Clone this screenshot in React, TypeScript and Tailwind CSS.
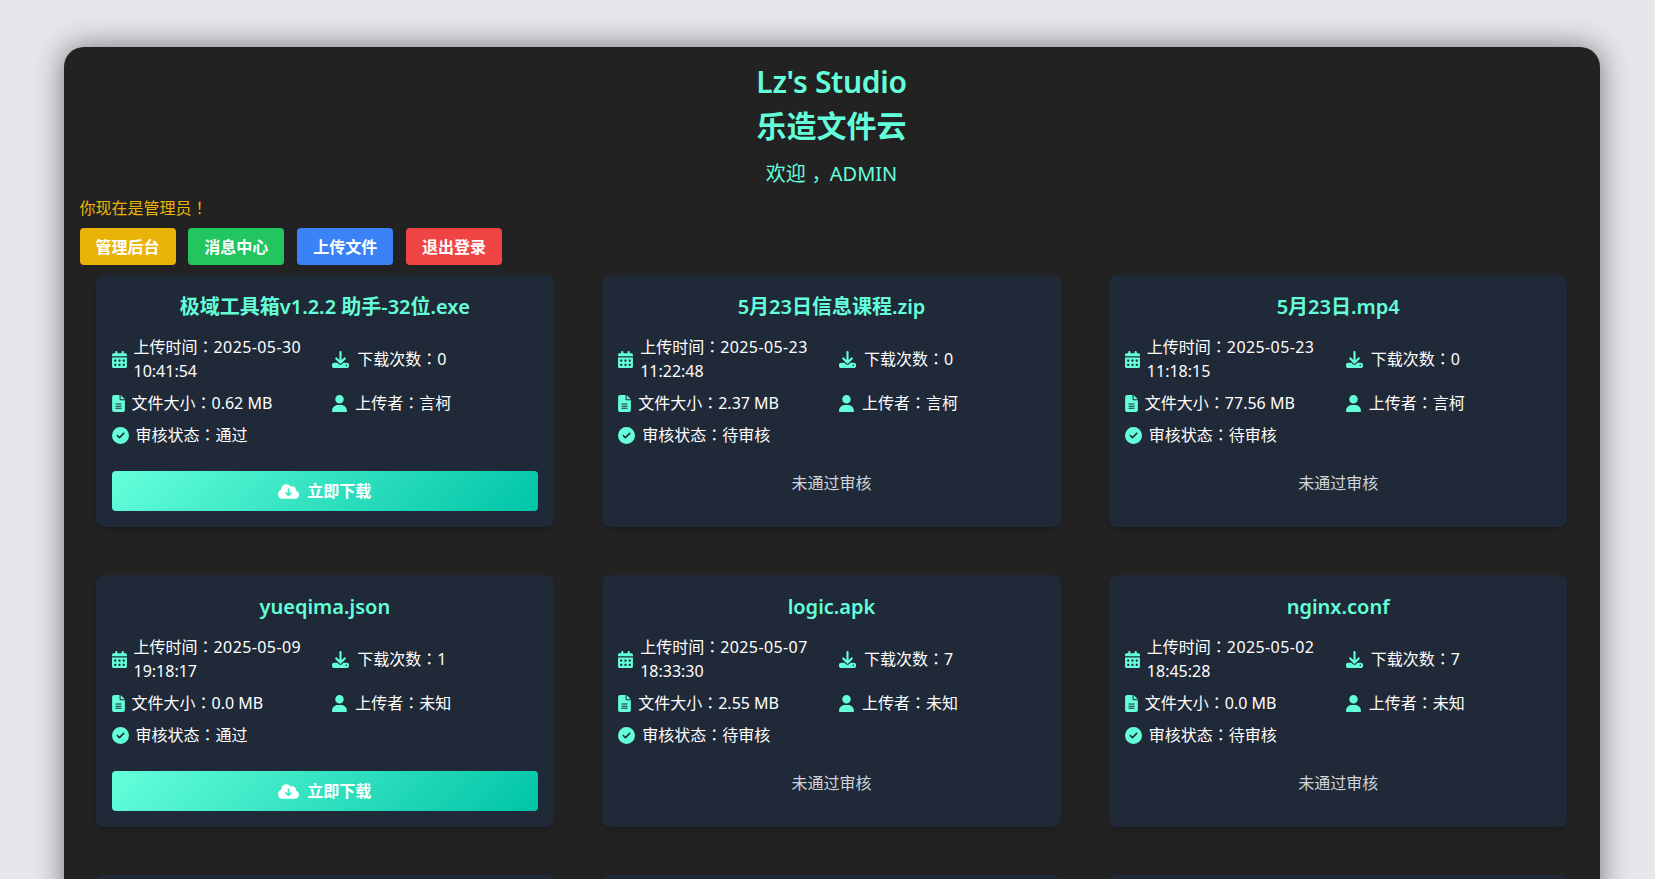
import React from "react";
import {
	FaCalendarDays,
	FaCircleCheck,
	FaCloudArrowDown,
	FaDownload,
	FaFileLines,
	FaUser,
} from "react-icons/fa6";

interface FileItem {
	name: string;
	date: string;
	time: string;
	downloads: number;
	size: string;
	uploader: string;
	status: string;
}

const files: FileItem[] = [
	{ name: "极域工具箱v1.2.2 助手-32位.exe", date: "2025-05-30", time: "10:41:54", downloads: 0, size: "0.62 MB", uploader: "言柯", status: "通过" },
	{ name: "5月23日信息课程.zip", date: "2025-05-23", time: "11:22:48", downloads: 0, size: "2.37 MB", uploader: "言柯", status: "待审核" },
	{ name: "5月23日.mp4", date: "2025-05-23", time: "11:18:15", downloads: 0, size: "77.56 MB", uploader: "言柯", status: "待审核" },
	{ name: "yueqima.json", date: "2025-05-09", time: "19:18:17", downloads: 1, size: "0.0 MB", uploader: "未知", status: "通过" },
	{ name: "logic.apk", date: "2025-05-07", time: "18:33:30", downloads: 7, size: "2.55 MB", uploader: "未知", status: "待审核" },
	{ name: "nginx.conf", date: "2025-05-02", time: "18:45:28", downloads: 7, size: "0.0 MB", uploader: "未知", status: "待审核" },
];

// TC face centres full-width punctuation like the reference does
const Punct: React.FC<{ char: string }> = ({ char }) => (
	<span className="leading-none [font-family:'Noto_Sans_CJK_TC',sans-serif]">{char}</span>
);

const FileCard: React.FC<{ file: FileItem }> = ({ file }) => (
	<div className="h-[252px] rounded-lg bg-[#1f2937] p-4 shadow-md">
		<h3 className="mt-px text-center text-xl leading-[30px] font-semibold text-[#64ffda]">
			{file.name}
		</h3>
		<div className="mt-[13px] grid grid-cols-2 gap-x-[15px] gap-y-2 text-white">
			<div className="flex items-center gap-[7px]">
				<FaCalendarDays className="h-[17px] w-[15px] shrink-0 text-[#64ffda]" />
				<span>
					上传时间<Punct char="：" /><span className="tracking-[0.4px]">{file.date}</span> {file.time}
				</span>
			</div>
			<div className="flex items-center gap-2">
				<FaDownload className="h-[17px] w-[17px] shrink-0 text-[#64ffda]" />
				<span>
					下载次数<Punct char="：" />{file.downloads}
				</span>
			</div>
			<div className="flex items-center gap-[7px]">
				<FaFileLines className="h-[17px] w-[13px] shrink-0 text-[#64ffda]" />
				<span>
					文件大小<Punct char="：" />{file.size}
				</span>
			</div>
			<div className="flex items-center gap-2">
				<FaUser className="h-[17px] w-[15px] shrink-0 text-[#64ffda]" />
				<span>
					上传者<Punct char="：" />{file.uploader}
				</span>
			</div>
			<div className="col-span-2 flex items-center gap-[7px]">
				<FaCircleCheck className="h-[17px] w-[17px] shrink-0 text-[#64ffda]" />
				<span>
					审核状态<Punct char="：" />{file.status}
				</span>
			</div>
		</div>
		{file.status === "通过" ? (
			<button className="mt-6 flex h-10 w-full items-center justify-center gap-2 rounded bg-linear-[135deg] from-[#64ffda] to-[#00c4a7] font-bold text-white">
				<FaCloudArrowDown className="h-[17px] w-[21px]" />
				立即下载
			</button>
		) : (
			<p className="mt-6 text-center text-[#d1d5db]">未通过审核</p>
		)}
	</div>
);

export default function App() {
	return (
		<div className="h-screen overflow-hidden bg-[#e5e7eb] pt-[47px] pl-[63.5px] [font-family:'Noto_Sans','Noto_Sans_CJK_SC',sans-serif]">
			<div className="w-[1536px] rounded-[20px] bg-[#222222] px-4 pt-3 pb-10 shadow-[0_0_30px_rgba(0,0,0,0.5)]">
				<h1 className="pb-[2px] text-center text-3xl text-[#64ffda]">
					<span className="block leading-[45px] font-semibold tracking-[-0.3px]">Lz's Studio</span>
					<span className="block leading-[43px] font-bold">乐造文件云</span>
				</h1>
				<p className="mt-[10px] text-center text-xl leading-[30px] text-[#64ffda]">
					欢迎<span className="px-[7px] [font-feature-settings:'palt']">，</span>ADMIN
				</p>
				<p className="mt-[7px] text-[#eab308]">
					你现在是管理员<Punct char="！" />
				</p>
				<div className="mt-2 flex gap-[12.8px]">
					<button className="h-[37px] rounded bg-[#eab308] px-4 font-bold text-white">管理后台</button>
					<button className="h-[37px] rounded bg-[#22c55e] px-4 font-bold text-white">消息中心</button>
					<button className="h-[37px] rounded bg-[#3b82f6] px-4 font-bold text-white">上传文件</button>
					<button className="h-[37px] rounded bg-[#ef4444] px-4 font-bold text-white">退出登录</button>
				</div>
				<div className="mt-[10px] grid grid-cols-3 gap-12 px-4">
					{files.map(file => (
						<FileCard file={file} key={file.name} />
					))}
					<div className="h-[252px] rounded-lg bg-[#1f2937] shadow-md" />
					<div className="h-[252px] rounded-lg bg-[#1f2937] shadow-md" />
					<div className="h-[252px] rounded-lg bg-[#1f2937] shadow-md" />
				</div>
			</div>
		</div>
	);
}
